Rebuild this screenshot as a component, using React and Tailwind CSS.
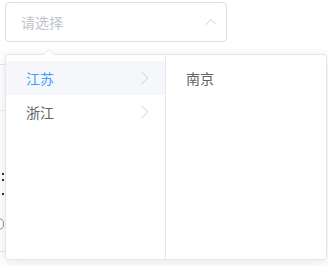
import { ChevronUp, ChevronRight } from 'lucide-react';

const provinces = [
  { label: '江苏', active: true },
  { label: '浙江', active: false },
];

export default function App() {
  return (
    <div
      className="relative w-[328px] h-[266px] bg-white overflow-hidden"
      style={{ fontFamily: '"Noto Sans CJK SC", "Noto Sans", sans-serif' }}
    >
      {/* page content peeking behind the popper */}
      <div className="absolute left-0 top-[64px] w-[5px] h-px bg-[#e4e7ed]" />
      <div className="absolute left-0 top-[110px] w-[5px] h-px bg-[#ebeef5]" />
      <div className="absolute left-[2px] top-[173px] flex flex-col gap-[4px]">
        <span className="w-[2px] h-[2px] bg-[#303133]" />
        <span className="w-[2px] h-[2px] bg-[#303133]" />
        <span className="w-[2px] h-[2px] bg-[#303133] mt-[8px]" />
      </div>
      <div className="absolute left-[-6px] top-[218px] w-[10px] h-[12px] rounded-full border border-[#8a8f99]" />
      <div className="absolute left-0 top-[251px] w-[5px] h-px bg-[#e4e7ed]" />

      {/* input */}
      <div className="pt-[2px] pl-[5px]">
        <div className="w-[222px] h-[40px] border border-[#dcdfe6] rounded-[4px] flex items-center justify-between pl-[15px] pr-[5px]">
          <span className="text-[14px] text-[#c0c4cc]">请选择</span>
          <ChevronUp size={20} strokeWidth={1} className="text-[#c0c4cc]" />
        </div>
      </div>

      {/* popper */}
      <div className="absolute left-[5px] top-[54px] border border-[#e4e7ed] rounded-[4px] bg-white shadow-[0_2px_12px_rgba(0,0,0,0.1)] flex">
        <div className="absolute left-[37px] top-[-6px] w-0 h-0 border-x-[6px] border-x-transparent border-b-[6px] border-b-[#e4e7ed]" />
        <div className="absolute left-[38px] top-[-5px] w-0 h-0 border-x-[5px] border-x-transparent border-b-[5px] border-b-white" />
        <div className="w-[160px] h-[204px] border-r border-[#e4e7ed] py-[6px]">
          {provinces.map((p) => (
            <div
              key={p.label}
              className={`h-[34px] flex items-center justify-between pl-[20px] pr-[9px] text-[14px] ${
                p.active ? 'bg-[#f5f7fa] text-[#409eff]' : 'text-[#606266]'
              }`}
            >
              <span>{p.label}</span>
              <ChevronRight size={22} strokeWidth={0.9} className="text-[#c0c4cc]" />
            </div>
          ))}
        </div>
        <div className="w-[160px] h-[204px] py-[6px]">
          <div className="h-[34px] flex items-center pl-[20px] text-[14px] text-[#606266]">南京</div>
        </div>
      </div>
    </div>
  );
}
